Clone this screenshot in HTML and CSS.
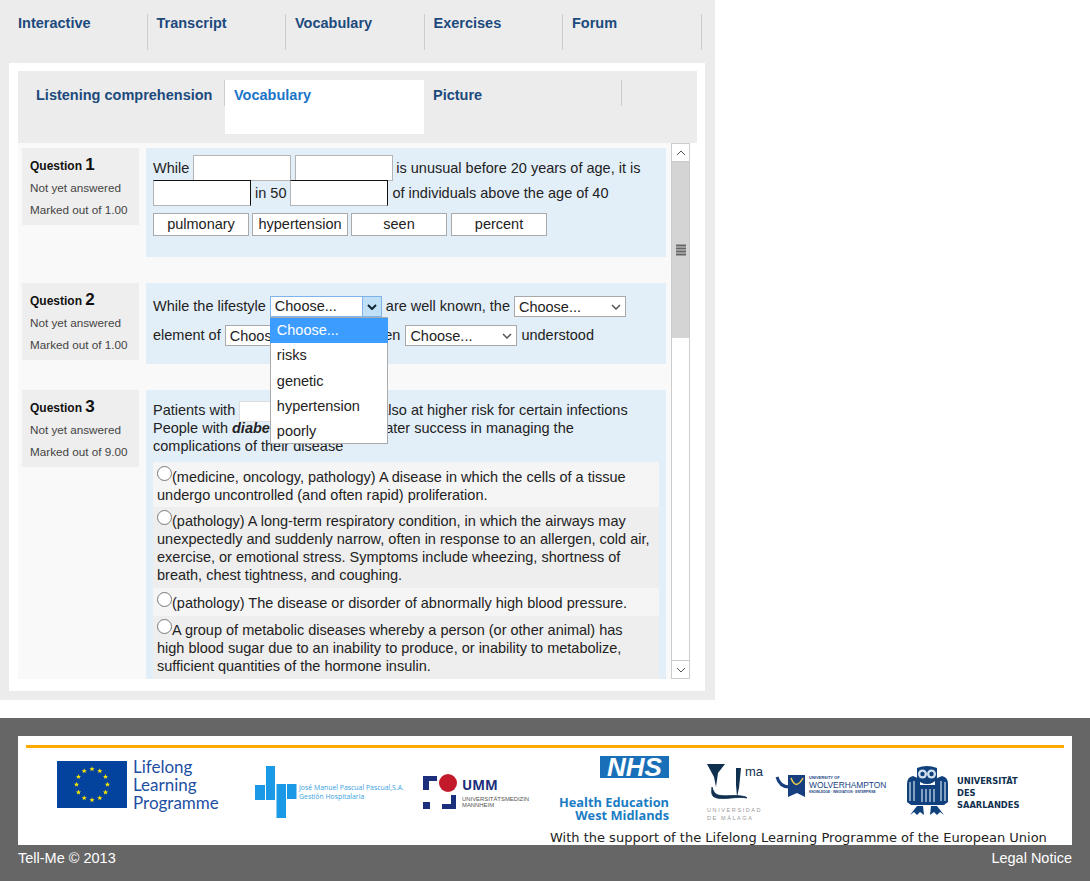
FILE: index.html
```html
<!DOCTYPE html>
<html lang="en">
<head>
<meta charset="utf-8">
<title>Tell-Me</title>
<link rel="stylesheet" href="styles.css">
</head>
<body>
<main class="panel">
  <nav class="nav">
    <a class="nav-tab">Interactive</a>
    <a class="nav-tab">Transcript</a>
    <a class="nav-tab">Vocabulary</a>
    <a class="nav-tab">Exercises</a>
    <a class="nav-tab">Forum</a>
  </nav>
  <section class="sheet">
    <div class="subnav">
      <a class="sub sub-first">Listening comprehension</a>
      <a class="sub sub-active">Vocabulary</a>
      <a class="sub sub-last">Picture</a>
    </div>
    <div class="scroller">
      <div class="questions">
        <article class="q q1">
          <aside class="info">
            <h3 class="qt">Question <span class="qn">1</span></h3>
            <p class="meta">Not yet answered</p>
            <p class="meta">Marked out of 1.00</p>
          </aside>
          <div class="body">
            <div class="line"><span>While</span><input class="gap gap-soft"><input class="gap gap-soft"><span class="tight">is unusual before 20 years of age, it is</span></div>
            <div class="line"><input class="gap gap-hard"><span>in 50</span><input class="gap gap-hard"><span>of individuals above the age of 40</span></div>
            <div class="chips">
              <span class="chip">pulmonary</span><span class="chip">hypertension</span><span class="chip">seen</span><span class="chip">percent</span>
            </div>
          </div>
        </article>
        <article class="q q2">
          <aside class="info">
            <h3 class="qt">Question <span class="qn">2</span></h3>
            <p class="meta">Not yet answered</p>
            <p class="meta">Marked out of 1.00</p>
          </aside>
          <div class="body">
            <div class="sline"><span class="stext">While the lifestyle</span>
              <span class="open-select">
                <span class="open-value">Choose...</span>
                <span class="open-arrow"><svg width="10" height="6" viewBox="0 0 10 6"><path d="M1 1l4 4 4-4" fill="none" stroke="#123" stroke-width="2"/></svg></span>
                <ul class="menu">
                  <li class="menu-on">Choose...</li>
                  <li>risks</li>
                  <li>genetic</li>
                  <li>hypertension</li>
                  <li>poorly</li>
                </ul>
              </span>
              <span class="stext">are well known, the</span>
              <span class="sel-wrap"><select class="sel"><option>Choose...</option></select><svg class="chev" width="10" height="6" viewBox="0 0 10 6"><path d="M1 1l4 4 4-4" fill="none" stroke="#555" stroke-width="1.500"/></svg></span>
            </div>
            <div class="sline"><span class="stext">element of</span>
              <span class="sel-wrap"><select class="sel"><option>Choose...</option></select><svg class="chev" width="10" height="6" viewBox="0 0 10 6"><path d="M1 1l4 4 4-4" fill="none" stroke="#555" stroke-width="1.500"/></svg></span>
              <span class="stext stext-wide">has been</span>
              <span class="sel-wrap"><select class="sel"><option>Choose...</option></select><svg class="chev" width="10" height="6" viewBox="0 0 10 6"><path d="M1 1l4 4 4-4" fill="none" stroke="#555" stroke-width="1.500"/></svg></span>
              <span class="stext">understood</span></div>
          </div>
        </article>
        <article class="q q3">
          <aside class="info">
            <h3 class="qt">Question <span class="qn">3</span></h3>
            <p class="meta">Not yet answered</p>
            <p class="meta">Marked out of 9.00</p>
          </aside>
          <div class="body">
            <div class="para">Patients with <input class="gap-small"> are also at higher risk for certain infections<br>People with <b><i>diabetes</i></b> who enjoy greater success in managing the<br>complications of their disease</div>
            <label class="opt opt-a"><input type="radio" class="radio" name="a">(medicine, oncology, pathology) A disease in which the cells of a tissue undergo uncontrolled (and often rapid) proliferation.</label>
            <label class="opt opt-b"><input type="radio" class="radio" name="a">(pathology) A long-term respiratory condition, in which the airways may unexpectedly and suddenly narrow, often in response to an allergen, cold air, exercise, or emotional stress. Symptoms include wheezing, shortness of breath, chest tightness, and coughing.</label>
            <label class="opt opt-c"><input type="radio" class="radio" name="a">(pathology) The disease or disorder of abnormally high blood pressure.</label>
            <label class="opt opt-b"><input type="radio" class="radio" name="a">A group of metabolic diseases whereby a person (or other animal) has high blood sugar due to an inability to produce, or inability to metabolize, sufficient quantities of the hormone insulin.</label>
          </div>
        </article>
      </div>
      <div class="bar">
        <span class="bar-btn"><svg width="10" height="6" viewBox="0 0 10 6"><path d="M1 5l4-4 4 4" fill="none" stroke="#555" stroke-width="1"/></svg></span>
        <span class="bar-thumb"><svg width="10" height="12" viewBox="0 0 10 12"><path d="M0 1.500h10M0 4.500h10M0 7.500h10M0 10.500h10" stroke="#666" stroke-width="2"/></svg></span>
        <span class="bar-track"></span>
        <span class="bar-btn bar-end"><svg width="10" height="6" viewBox="0 0 10 6"><path d="M1 1l4 4 4-4" fill="none" stroke="#555" stroke-width="1"/></svg></span>
      </div>
    </div>
  </section>
</main>
<footer class="foot">
  <div class="logos">
    <svg class="logo-svg" width="1054" height="109" viewBox="0 0 1054 109">
      <defs>
        <polygon id="star" points="0,-2.700 0.700,-0.800 2.600,-0.800 1.100,0.400 1.600,2.200 0,1.100 -1.600,2.200 -1.100,0.400 -2.600,-0.800 -0.700,-0.800"/>
      </defs>
      <rect x="8" y="9" width="1038" height="3" fill="#fdab00"/>
      <!-- EU flag -->
      <rect x="39" y="25" width="70" height="47" fill="#03439d"/>
      <g fill="#ffe800">
        <use href="#star" x="74" y="33"/><use href="#star" x="81.800" y="35"/><use href="#star" x="87.500" y="40.700"/><use href="#star" x="89.500" y="48.500"/><use href="#star" x="87.500" y="56.300"/><use href="#star" x="81.800" y="62"/><use href="#star" x="74" y="64"/><use href="#star" x="66.200" y="62"/><use href="#star" x="60.500" y="56.300"/><use href="#star" x="58.500" y="48.500"/><use href="#star" x="60.500" y="40.700"/><use href="#star" x="66.200" y="35"/>
      </g>
      <g class="t-llp">
        <text x="115" y="37">Lifelong</text>
        <text x="115" y="55">Learning</text>
        <text x="115" y="73">Programme</text>
      </g>
      <!-- Pascual -->
      <g fill="#1a9ae6">
        <rect x="237" y="49" width="10" height="15"/>
        <rect x="248" y="30" width="9" height="34"/>
        <rect x="258.500" y="48" width="9.500" height="34"/>
        <rect x="269" y="48" width="9.500" height="15"/>
      </g>
      <g class="t-pas">
        <text x="281" y="54">José Manuel Pascual Pascual,S.A.</text>
        <text x="281" y="63">Gestión Hospitalaria</text>
      </g>
      <!-- UMM -->
      <path d="M405 40h14v5h-8v9h-6zM424 59h14v14h-14v-5h9v-9z" fill="#1c2f7c"/>
      <rect x="405" y="66" width="7" height="7" fill="#1c2f7c"/>
      <circle cx="430" cy="47" r="9" fill="#c21a2b"/>
      <text class="t-umm" x="444" y="54">UMM</text>
      <g class="t-umm2">
        <text x="444" y="65">UNIVERSITÄTSMEDIZIN</text>
        <text x="444" y="71">MANNHEIM</text>
      </g>
      <!-- NHS -->
      <rect x="582" y="20" width="69" height="22" fill="#1a70b8"/>
      <text class="t-nhs" x="616.500" y="40">NHS</text>
      <g class="t-hee">
        <text x="651" y="71">Health Education</text>
        <text x="651" y="84">West Midlands</text>
      </g>
      <!-- UMA -->
      <path d="M689 28h18l-7 9-2 14-2-10z" fill="#10304f"/>
      <path d="M718 32h5l-2 20-2 9-1-12z" fill="#10304f"/>
      <path d="M694 51c-1 7 0 10 5 11 8 2 20-2 30 0l-1-1c-10-3-20 0-28-2-3-1-5-4-6-8z" fill="#10304f" stroke="#10304f" stroke-width="0.800"/>
      <text class="t-ma" x="727" y="40">ma</text>
      <g class="t-uma">
        <text x="689" y="76">UNIVERSIDAD</text>
        <text x="689" y="83.500">DE MÁLAGA</text>
      </g>
      <!-- Wolverhampton -->
      <path d="M759 41c2 7 7 10 12 10" fill="none" stroke="#173f7f" stroke-width="3"/>
      <path d="M770 39h17v22l-8-4-9 4z" fill="#173f7f"/>
      <path d="M773 42c3 8 7 9 12 0" fill="none" stroke="#f2d34a" stroke-width="1.500"/>
      <text class="t-w1" x="791" y="43">UNIVERSITY OF</text>
      <text class="t-w2" x="791" y="52">WOLVERHAMPTON</text>
      <text class="t-w3" x="791" y="57">KNOWLEDGE · INNOVATION · ENTERPRISE</text>
      <!-- Saarland owl -->
      <g fill="#10417c">
        <path d="M889 48q0-7 6-8l7 3v26h-9l-4-3z"/>
        <path d="M930 48q0-7-6-8l-7 3v26h9l4-3z"/>
        <rect x="901" y="49" width="16" height="20"/>
        <path d="M899 32q10-4 20 0v10q-3 6-10 6t-10-6z"/>
        <path d="M892 79l7-9h6l1 9-4-3-3 3-3-3zM926 79l-7-9h-6l-1 9 4-3 3 3 3-3z"/>
      </g>
      <circle cx="904.500" cy="38" r="4.500" fill="#cfe0ee"/><circle cx="913.500" cy="38" r="4.500" fill="#cfe0ee"/>
      <circle cx="904.500" cy="38" r="2.200" fill="#10417c"/><circle cx="913.500" cy="38" r="2.200" fill="#10417c"/>
      <path d="M904 53v13M908 53v13M912 53v13M916 53v13M892 46v19M896 45v20M923 45v20M927 46v19" stroke="#cfe0ee" stroke-width="1.200"/>
      <g class="t-saar">
        <text x="939" y="48">UNIVERSITÄT</text>
        <text x="939" y="60">DES</text>
        <text x="939" y="72">SAARLANDES</text>
      </g>
      <text class="t-cap" x="532" y="106">With the support of the Lifelong Learning Programme of the European Union</text>
    </svg>
  </div>
  <div class="foot-row"><span>Tell-Me © 2013</span><span>Legal Notice</span></div>
</footer>
</body>
</html>
```

FILE: styles.css
```css
* { box-sizing: border-box; }
html, body { margin: 0; padding: 0; }
body {
  background: #fff;
  font-family: "Liberation Sans", Arial, sans-serif;
  font-size: 14.500px;
  color: #222;
  height: 881px;
  overflow: hidden;
}
.panel {
  width: 715px;
  height: 700px;
  background: #ececec;
  padding: 14px 10px 9px 9px;
}
.nav { display: flex; height: 36px; margin-bottom: 13px; }
.nav-tab {
  width: 138.500px;
  padding-left: 9px;
  border-right: 1px solid #ccc;
  font-weight: 700;
  color: #1c4a7c;
  line-height: 18px;
}
.sheet {
  background: #fff;
  height: 628px;
  padding: 8px 8px 0 9px;
}
.subnav {
  display: flex;
  height: 72px;
  background: #ececec;
  padding-top: 9px;
}
.sub { display: block; font-weight: 700; color: #1c4a7c; line-height: 18px; padding-top: 6px; }
.sub-first {
  width: 207px;
  padding-left: 18px;
  height: 26px;
  border-right: 1px solid #ccc;
  white-space: nowrap;
}
.sub-active {
  width: 199px;
  height: 54px;
  background: #fff;
  color: #1b75c9;
  padding-left: 9px;
}
.sub-last {
  width: 198px;
  height: 26px;
  padding-left: 9px;
  border-right: 1px solid #ccc;
}
.scroller { display: flex; height: 536px; width: 672px; background: #f9f9f9; }
.questions { width: 653px; height: 536px; overflow: hidden; padding: 5px 0 0 4px; }
.q { display: flex; align-items: flex-start; gap: 7px; margin-bottom: 26px; }
.info { width: 117px; height: 77px; background: #eee; padding: 8px 8px 0; flex: none; }
.qt { margin: 0 0 4px; font-size: 12px; font-weight: 700; color: #111; line-height: 18px; }
.qn { font-size: 17px; }
.meta { margin: 0 0 4.500px; font-size: 11.700px; color: #444; line-height: 17.500px; }
.body { width: 520px; background: #e2eff9; padding: 7px 7px 0; position: relative; color: #222; }
.q1 .body { height: 109px; }
.q2 .body { height: 81px; padding-top: 9px; }
.q3 .body { padding-top: 11px; }
.line { height: 25px; display: flex; align-items: center; gap: 4px; white-space: nowrap; }
.tight { margin-left: -1px; }
.gap { width: 98px; height: 26px; background: #fff; padding: 0; margin: 0; flex: none; outline: 0; }
.gap-soft { border: 1px solid #b4b4b4; }
.gap-hard { border: 1px solid #b4b4b4; border-top-color: #111; border-right-color: #111; }
.chips { display: flex; gap: 3px; margin-top: 8px; }
.chip {
  width: 96px;
  height: 23px;
  background: #fff;
  border: 1px solid #aaa;
  text-align: center;
  line-height: 21px;
}
.chip:last-child { margin-left: 1px; }
.sline { height: 29px; display: flex; align-items: center; gap: 4px; white-space: nowrap; }
.stext { padding-bottom: 2px; }
.stext-wide { padding-right: 1px; }
.sel-wrap { position: relative; display: flex; flex: none; }
.sel {
  appearance: none;
  width: 112px;
  height: 21px;
  font: 14.500px "Liberation Sans", Arial, sans-serif;
  background: #fff;
  border: 1px solid #a9a9a9;
  color: #222;
  padding: 0 0 0 4px;
  margin: 0;
  border-radius: 0;
}
.chev { position: absolute; right: 5px; top: 8px; }
.open-select {
  position: relative;
  display: flex;
  width: 112px;
  height: 21px;
  background: #fff;
  border: 1px solid #7eb4ea;
  flex: none;
}
.open-value { flex: 1; padding-left: 4px; line-height: 19px; }
.open-arrow {
  width: 19px;
  background: #bfe0f7;
  border-left: 1px solid #7eb4ea;
  display: flex;
  align-items: center;
  justify-content: center;
}
.menu {
  position: absolute;
  left: -1px;
  top: 20px;
  width: 118px;
  height: 127px;
  margin: 0;
  padding: 0;
  list-style: none;
  background: #fff;
  border: 1px solid #aaa;
  z-index: 3;
}
.menu li { height: 25.300px; line-height: 25px; padding-left: 6px; }
.menu .menu-on { background: #3c9cff; color: #fff; margin: 0 -1px 0 -1px; padding-left: 7px; }
.para { line-height: 18px; margin-bottom: 7px; }
.gap-small { width: 112px; height: 21px; margin: -3px 0; border: 1px solid #ddd; background: #fff; padding: 0; vertical-align: middle; }
.opt { display: block; padding: 5px 6px 4px 4px; line-height: 18px; }
.opt-a { background: #f5f5f5; padding: 6px 6px 3px 4px; }
.opt-b { background: #eee; }
.opt-c { background: #f5f5f5; padding: 6px 6px 4px 4px; }
.radio { width: 15px; height: 15px; margin: -3px 0; vertical-align: 1px; }
.bar {
  width: 19px;
  height: 536px;
  display: flex;
  flex-direction: column;
  background: #fff;
  border: 1px solid #ccc;
  border-top: 0;
  border-bottom: 0;
}
.bar-btn { height: 19px; flex: none; display: flex; align-items: center; justify-content: center; border: solid #ccc; border-width: 1px 0; background: #fff; }
.bar-thumb { height: 176px; flex: none; background: #d4d4d4; display: flex; align-items: center; justify-content: center; }
.bar-track { flex: 1; background: #fff; }
.foot {
  margin-top: 18px;
  height: 163px;
  background: #666;
  padding: 18px 18px 0;
  color: #fff;
}
.logos { height: 109px; background: #fff; overflow: hidden; }
.logo-svg { display: block; }
.foot-row { display: flex; justify-content: space-between; line-height: 18px; padding-top: 4px; }
.t-llp { font: 17px Lato, sans-serif; fill: #1c4fa3; }
.t-pas { font: 6.900px "Open Sans", sans-serif; fill: #3a9fe0; }
.t-umm { font: 700 13.500px "Open Sans", sans-serif; fill: #1c2f7c; }
.t-umm2 { font: 5.900px "Liberation Sans", sans-serif; fill: #555; }
.t-nhs { font: italic 700 26px "Liberation Sans", sans-serif; fill: #fff; text-anchor: middle; }
.t-hee { font: 700 12.800px "Open Sans", sans-serif; fill: #1a7cc4; text-anchor: end; }
.t-ma { font: 13px "Liberation Sans", sans-serif; fill: #10304f; }
.t-uma { font: 5.500px "Liberation Sans", sans-serif; fill: #999; letter-spacing: 1.600px; }
.t-w1 { font: 700 4px "Liberation Sans", sans-serif; fill: #173f7f; }
.t-w2 { font: 8.400px "Liberation Sans", sans-serif; fill: #173f7f; }
.t-w3 { font: 700 3.200px "Liberation Sans", sans-serif; fill: #173f7f; }
.t-saar { font: 700 8.300px "DejaVu Sans", sans-serif; fill: #10304f; }
.t-cap { font: 13px "DejaVu Sans", sans-serif; fill: #222; }
```
